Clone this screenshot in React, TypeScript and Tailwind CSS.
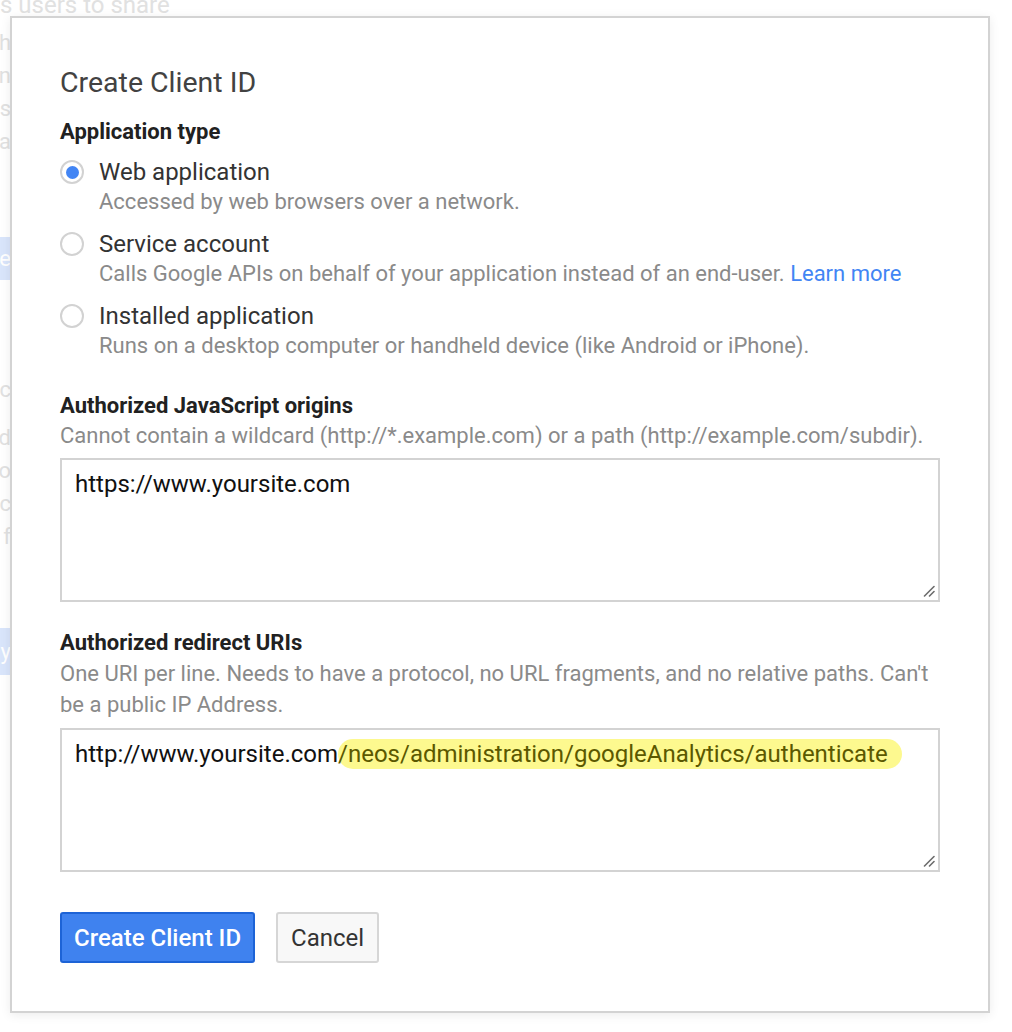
import React from 'react';

// Create Client ID dialog over a faded console page

const FONT = { fontFamily: 'Roboto, "Noto Sans", Arial, sans-serif' };

const Grip = () => (
  <svg
    className="absolute right-[3px] bottom-[3px]"
    width="12"
    height="12"
    viewBox="0 0 12 12"
  >
    <path d="M1.5 11 L11 1.5" stroke="#6b6b6b" strokeWidth="1.6" strokeLinecap="round" />
    <path d="M6.5 11 L11 6.5" stroke="#6b6b6b" strokeWidth="1.6" strokeLinecap="round" />
  </svg>
);

const Radio: React.FC<{ checked?: boolean }> = ({ checked }) => (
  <span className="mt-[3px] flex h-[24px] w-[24px] shrink-0 items-center justify-center rounded-full border-2 border-[#d2d2d2] bg-white">
    {checked && <span className="h-[13px] w-[13px] rounded-full bg-[#4285f4]" />}
  </span>
);

const options = [
  {
    title: 'Web application',
    desc: 'Accessed by web browsers over a network.',
    checked: true,
  },
  {
    title: 'Service account',
    desc: 'Calls Google APIs on behalf of your application instead of an end-user.',
    link: 'Learn more',
  },
  {
    title: 'Installed application',
    desc: 'Runs on a desktop computer or handheld device (like Android or iPhone).',
  },
];

// bits of the page behind the dialog, only their right edge shows
const behind: { t: string; h: string; blue?: boolean }[] = [
  { t: '', h: 'h-[26px]' },
  { t: 'with', h: 'h-[33px]' },
  { t: 'on', h: 'h-[33px]' },
  { t: 'ls', h: 'h-[33px]' },
  { t: 'a', h: 'h-[33px]' },
  { t: '', h: 'h-[79px]' },
  { t: 'Create', h: 'h-[43px]', blue: true },
  { t: '', h: 'h-[94px]' },
  { t: 'c', h: 'h-[32px]' },
  { t: '', h: 'h-[15px]' },
  { t: 'd', h: 'h-[33px]' },
  { t: 'o', h: 'h-[33px]' },
  { t: 'c', h: 'h-[33px]' },
  { t: 'f', h: 'h-[33px]' },
  { t: '', h: 'h-[75px]' },
  { t: 'Apply', h: 'h-[47px]', blue: true },
];

export default function App() {
  return (
    <div className="relative h-[1032px] w-[1012px] overflow-hidden bg-white" style={FONT}>
      {/* faded background page */}
      <div className="pointer-events-none select-none">
        <div className="absolute left-0 top-[-10px] text-[24px] leading-[30px] text-[#e1e1e1] whitespace-nowrap">
          s users to share
        </div>
        <div className="w-[11px] overflow-hidden text-[22px] text-[#e1e1e1]">
          {behind.map((b, i) => (
            <div
              key={i}
              className={`flex items-center justify-end whitespace-nowrap ${b.h}`}
            >
              {b.blue ? (
                <span className="flex h-full items-center bg-[#d9e5fb] pl-2 text-white">{b.t}</span>
              ) : (
                <span className="leading-[30px]">{b.t}</span>
              )}
            </div>
          ))}
        </div>
      </div>

      {/* dialog */}
      <div className="absolute left-[10px] top-[16px] h-[997px] w-[980px] border-2 border-[#d3d3d3] bg-white px-[48px] pt-[47px] shadow-[0_2px_10px_rgba(0,0,0,0.08)]">
        <h1 className="text-[28.5px] leading-[36px] text-[#424242]">Create Client ID</h1>

        <div className="mt-[16px] text-[22px] font-bold leading-[30px] text-[#212121]">
          Application type
        </div>

        <div className="mt-[10px] flex flex-col gap-[12px]">
          {options.map(o => (
            <div key={o.title} className="flex gap-[15px]">
              <Radio checked={o.checked} />
              <div>
                <div className="text-[24px] leading-[30px] text-[#333333]">{o.title}</div>
                <div className="text-[22px] leading-[30px] text-[#8a8a8a]">
                  {o.desc}
                  {o.link && <span className="text-[#4285f4]"> {o.link}</span>}
                </div>
              </div>
            </div>
          ))}
        </div>

        <div className="mt-[30px] text-[22px] font-bold leading-[30px] text-[#212121]">
          Authorized JavaScript origins
        </div>
        <div className="text-[22px] leading-[30px] text-[#8a8a8a]">
          Cannot contain a wildcard (http://*.example.com) or a path (http://example.com/subdir).
        </div>
        <div className="relative mt-[7px] h-[144px] w-[880px] border-2 border-[#d3d3d3] bg-white px-[13px] pt-[9px] text-[24px] leading-[30px] text-[#111111]">
          https://www.yoursite.com
          <Grip />
        </div>

        <div className="mt-[26px] text-[22px] font-bold leading-[30px] text-[#212121]">
          Authorized redirect URIs
        </div>
        <div className="w-[880px] text-[22px] leading-[31px] text-[#8a8a8a]">
          One URI per line. Needs to have a protocol, no URL fragments, and no relative paths. Can't
          be a public IP Address.
        </div>
        <div className="relative mt-[8px] h-[144px] w-[880px] border-2 border-[#d3d3d3] bg-white px-[13px] pt-[9px] text-[24px] leading-[30px] text-[#111111]">
          http://www.yoursite.com
          <span className="rounded-full bg-[#fdf98f] py-[1px] pr-[14px] text-[#5b5800]">
            /neos/administration/googleAnalytics/authenticate
          </span>
          <Grip />
        </div>

        <div className="mt-[40px] flex gap-[21px]">
          <button className="h-[51px] rounded-[3px] border-2 border-[#1d63d6] bg-[#3f82ef] px-[12px] text-[24px] font-medium text-white">
            Create Client ID
          </button>
          <button className="h-[51px] rounded-[3px] border-2 border-[#d6d6d6] bg-[#f8f8f8] px-[13px] text-[24px] text-[#333333]">
            Cancel
          </button>
        </div>
      </div>
    </div>
  );
}
